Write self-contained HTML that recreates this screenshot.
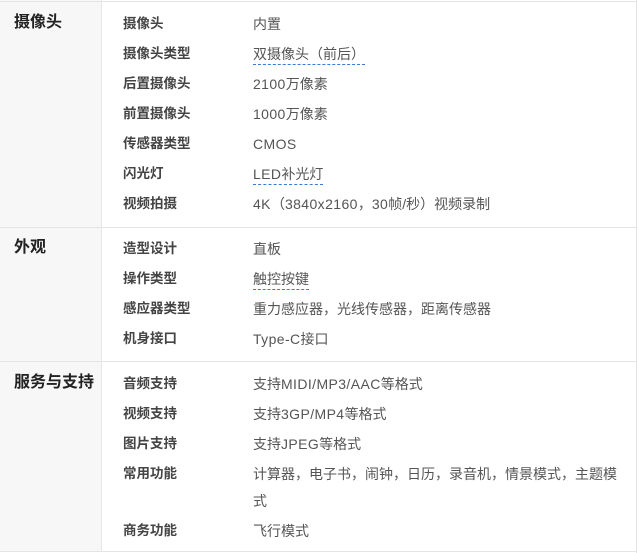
<!DOCTYPE html>
<html><head><meta charset="utf-8"><style>
*{margin:0;padding:0;box-sizing:border-box}
html,body{width:639px;height:553px;background:#fff;overflow:hidden;font-family:"Liberation Sans","Noto Sans CJK SC",sans-serif;color:#333}
.lc{position:absolute;left:0;width:102px;background:#f7f7f7;border-right:1px solid #e6e6e6}
.hl{position:absolute;left:0;width:637px;height:1px;background:#e4e4e4}
.vr{position:absolute;left:636px;top:0;width:1px;height:553px;background:#e4e4e4}
.h{position:absolute;left:14px;font-size:16px;font-weight:bold;color:#222;line-height:20px}
.k{position:absolute;left:123px;font-size:13.5px;font-weight:bold;color:#444;line-height:20px}
.v{position:absolute;left:253px;font-size:14px;color:#555;line-height:20px;white-space:nowrap}
.l{letter-spacing:0.4px}
.d{border-bottom:1px dashed #3a7bd5;padding-bottom:2px}
</style></head><body>
<div class="lc" style="top:0;height:552px"></div>
<div class="hl" style="top:1px"></div>
<div class="hl" style="top:227px"></div>
<div class="hl" style="top:361px"></div>
<div class="hl" style="top:551px"></div>
<div class="vr"></div>

<div class="h" style="top:13px">摄像头</div>
<div class="k" style="top:14px">摄像头</div><div class="v" style="top:14px">内置</div>
<div class="k" style="top:44px">摄像头类型</div><div class="v" style="top:44px"><span class="d">双摄像头（前后）</span></div>
<div class="k" style="top:74px">后置摄像头</div><div class="v" style="top:74px"><span class="l">2100</span>万像素</div>
<div class="k" style="top:104px">前置摄像头</div><div class="v" style="top:104px"><span class="l">1000</span>万像素</div>
<div class="k" style="top:134px">传感器类型</div><div class="v l" style="top:134px">CMOS</div>
<div class="k" style="top:164px">闪光灯</div><div class="v" style="top:164px"><span class="d"><span class="l">LED</span>补光灯</span></div>
<div class="k" style="top:194px">视频拍摄</div><div class="v" style="top:194px"><span class="l">4K</span>（<span class="l">3840x2160</span>，<span class="l">30</span>帧/秒）视频录制</div>

<div class="h" style="top:238px">外观</div>
<div class="k" style="top:239px">造型设计</div><div class="v" style="top:239px">直板</div>
<div class="k" style="top:269px">操作类型</div><div class="v" style="top:269px"><span class="d">触控按键</span></div>
<div class="k" style="top:299px">感应器类型</div><div class="v" style="top:299px">重力感应器，光线传感器，距离传感器</div>
<div class="k" style="top:329px">机身接口</div><div class="v" style="top:329px"><span class="l">Type-C</span>接口</div>

<div class="h" style="top:373px">服务与支持</div>
<div class="k" style="top:374px">音频支持</div><div class="v" style="top:374px">支持<span class="l">MIDI/MP3/AAC</span>等格式</div>
<div class="k" style="top:404px">视频支持</div><div class="v" style="top:404px">支持<span class="l">3GP/MP4</span>等格式</div>
<div class="k" style="top:434px">图片支持</div><div class="v" style="top:434px">支持<span class="l">JPEG</span>等格式</div>
<div class="k" style="top:464px">常用功能</div><div class="v" style="top:461px;line-height:27px">计算器，电子书，闹钟，日历，录音机，情景模式，主题模<br>式</div>
<div class="k" style="top:521px">商务功能</div><div class="v" style="top:521px">飞行模式</div>
</body></html>
